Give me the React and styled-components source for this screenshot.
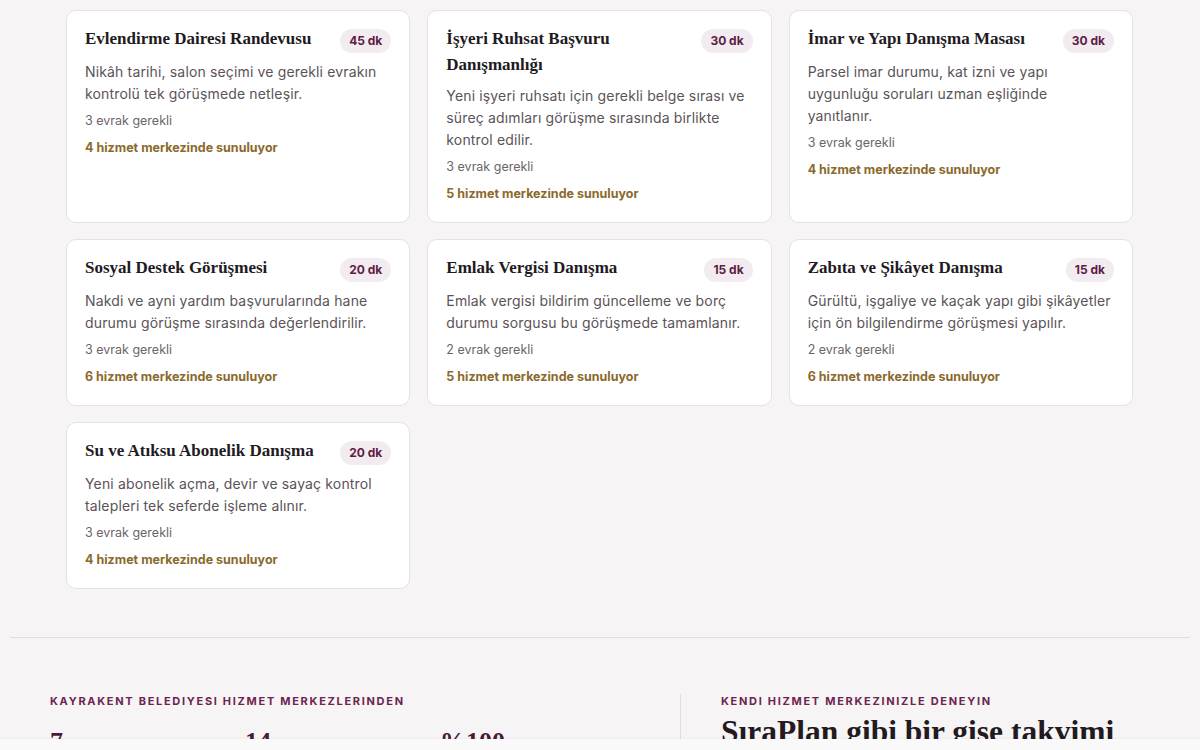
import React from 'react'
import styled, { createGlobalStyle } from 'styled-components'

const GlobalStyle = createGlobalStyle`
  html, body {
    margin: 0;
    padding: 0;
    background: #f7f4f5;
  }
  body {
    font-family: Inter, "Noto Sans", sans-serif;
    color: #221a1f;
  }
`

const Page = styled.div`
  padding: 10px 10px 0;
  min-height: 750px;
  box-sizing: border-box;
`

const Grid = styled.div`
  display: grid;
  grid-template-columns: repeat(3, 1fr);
  column-gap: 17px;
  row-gap: 16px;
  margin: 0 57px 0 56px;
`

const Card = styled.div`
  background: #ffffff;
  border: 1px solid #e6e1e4;
  border-radius: 10px;
  padding: 15px 18px 19px;
  box-sizing: border-box;
`

const CardHead = styled.div`
  display: flex;
  align-items: flex-start;
  justify-content: space-between;
  gap: 16px;
`

const Title = styled.h3`
  margin: 0;
  font-family: "Liberation Serif", "DejaVu Serif", serif;
  font-weight: 700;
  font-size: 17px;
  line-height: 26px;
  color: #221a1f;
`

const Badge = styled.span`
  flex: none;
  margin-top: 3px;
  margin-bottom: 1px;
  height: 24px;
  line-height: 24px;
  padding: 0 9px;
  border-radius: 12px;
  background: #f2ecf0;
  color: #5e1d47;
  font-size: 12px;
  font-weight: 700;
`

const Desc = styled.p`
  margin: 7px 0 0;
  font-size: 14px;
  letter-spacing: 0.15px;
  line-height: 22px;
  color: #5b5358;
`

const Docs = styled.div`
  margin-top: 7px;
  font-size: 12.5px;
  line-height: 18px;
  color: #6b6468;
`

const Centers = styled.div`
  margin-top: 9px;
  font-size: 12.5px;
  line-height: 18px;
  font-weight: 700;
  color: #8a6a2c;
`

const Footer = styled.section`
  margin-top: 48px;
  border-top: 1px solid #e2dde0;
  padding: 56px 40px 0;
  display: grid;
  grid-template-columns: 630px 1fr;
`

const Col = styled.div`
  ${p => p.$divided && `
    border-left: 1px solid #e2dde0;
    padding-left: 40px;
  `}
`

const Eyebrow = styled.div`
  font-size: 11px;
  line-height: 14px;
  font-weight: 700;
  letter-spacing: 1.7px;
  color: #6b2550;
  text-transform: uppercase;
`

const Stats = styled.div`
  display: grid;
  grid-template-columns: repeat(3, 195px);
  margin-top: 19px;
`

const StatNum = styled.div`
  font-family: "Liberation Serif", "DejaVu Serif", serif;
  font-size: 26px;
  line-height: 29px;
  font-weight: 700;
  color: #4a1a3a;
`

const Heading = styled.h2`
  margin: 5px 0 0;
  font-family: "Liberation Serif", "DejaVu Serif", serif;
  font-weight: 700;
  font-size: 31.5px;
  line-height: 38px;
  color: #221a1f;
`

const BottomBar = styled.div`
  position: fixed;
  left: 0;
  right: 0;
  bottom: 0;
  height: 11px;
  background: #f9f9fa;
  box-shadow: 0 -1px 2px rgba(0, 0, 0, 0.04);
`

const services = [
  { title: 'Evlendirme Dairesi Randevusu', dur: '45 dk', desc: 'Nikâh tarihi, salon seçimi ve gerekli evrakın kontrolü tek görüşmede netleşir.', docs: 3, centers: 4 },
  { title: 'İşyeri Ruhsat Başvuru Danışmanlığı', dur: '30 dk', desc: 'Yeni işyeri ruhsatı için gerekli belge sırası ve süreç adımları görüşme sırasında birlikte kontrol edilir.', docs: 3, centers: 5 },
  { title: 'İmar ve Yapı Danışma Masası', dur: '30 dk', desc: 'Parsel imar durumu, kat izni ve yapı uygunluğu soruları uzman eşliğinde yanıtlanır.', docs: 3, centers: 4 },
  { title: 'Sosyal Destek Görüşmesi', dur: '20 dk', desc: 'Nakdi ve ayni yardım başvurularında hane durumu görüşme sırasında değerlendirilir.', docs: 3, centers: 6 },
  { title: 'Emlak Vergisi Danışma', dur: '15 dk', desc: 'Emlak vergisi bildirim güncelleme ve borç durumu sorgusu bu görüşmede tamamlanır.', docs: 2, centers: 5 },
  { title: 'Zabıta ve Şikâyet Danışma', dur: '15 dk', desc: 'Gürültü, işgaliye ve kaçak yapı gibi şikâyetler için ön bilgilendirme görüşmesi yapılır.', docs: 2, centers: 6 },
  { title: 'Su ve Atıksu Abonelik Danışma', dur: '20 dk', desc: 'Yeni abonelik açma, devir ve sayaç kontrol talepleri tek seferde işleme alınır.', docs: 3, centers: 4 },
]

const ServiceCard = ({ s }) => (
  <Card>
    <CardHead>
      <Title>{s.title}</Title>
      <Badge>{s.dur}</Badge>
    </CardHead>
    <Desc>{s.desc}</Desc>
    <Docs>{s.docs} evrak gerekli</Docs>
    <Centers>{s.centers} hizmet merkezinde sunuluyor</Centers>
  </Card>
)

const App = () => {
  return (
    <Page>
      <GlobalStyle />
      <Grid>
        {services.map(s => <ServiceCard key={s.title} s={s} />)}
      </Grid>

      <Footer>
        <Col>
          <Eyebrow>Kayrakent Belediyesi hizmet merkezlerinden</Eyebrow>
          <Stats>
            <StatNum>7</StatNum>
            <StatNum>14</StatNum>
            <StatNum>%100</StatNum>
          </Stats>
        </Col>
        <Col $divided>
          <Eyebrow>Kendi hizmet merkezinizle deneyin</Eyebrow>
          <Heading>SıraPlan gibi bir gişe takvimi</Heading>
        </Col>
      </Footer>
      <BottomBar />
    </Page>
  )
}

export default App
